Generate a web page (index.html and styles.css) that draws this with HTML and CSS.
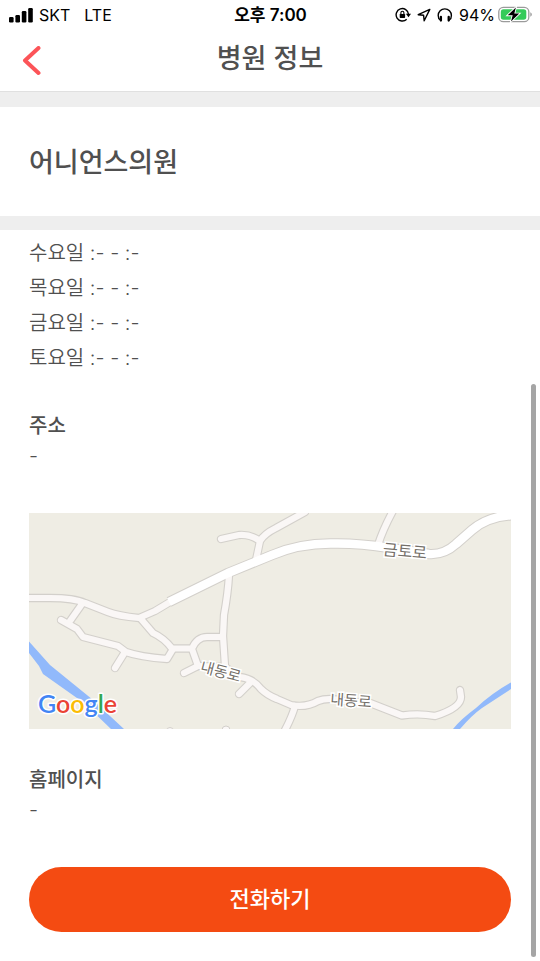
FILE: index.html
```html
<!DOCTYPE html>
<html lang="ko">
<head>
<meta charset="utf-8">
<meta name="viewport" content="width=device-width, initial-scale=1">
<title>병원 정보</title>
<link rel="stylesheet" href="styles.css">
</head>
<body>
<div class="screen">
  <div class="status">
    <div class="status-left">
      <svg width="24" height="16" viewBox="0 0 24 16" aria-hidden="true"><rect x="0" y="10" width="4.6" height="5.500" rx="1.2"/><rect x="6.400" y="8" width="4.600" height="7.500" rx="1.200"/><rect x="12.800" y="4" width="4.600" height="11.500" rx="1.200"/><rect x="19.200" y="1" width="4.600" height="14.500" rx="1.200"/></svg>
      <span>SKT</span>
      <span class="network">LTE</span>
    </div>
    <div class="time">오후 7:00</div>
    <div class="status-right">
      <svg width="16" height="16" viewBox="0 0 16 16" fill="none" stroke="#000" stroke-width="1.400" aria-hidden="true"><path d="M11.700 12.200A6.200 6.200 0 1 1 13.500 7.200"/><path d="M10.900 6.800h5.100l-2.500 3.400z" fill="#000" stroke="none"/><rect x="4.700" y="6.900" width="5.400" height="4.100" rx=".7" fill="#000" stroke="none"/><path d="M5.900 7V5.800a1.500 1.500 0 0 1 3 0V7" stroke-width="1.100"/></svg>
      <svg width="14" height="16" viewBox="0 0 14 16" fill="none" stroke="#000" stroke-width="1.400" stroke-linejoin="round" aria-hidden="true"><path d="M12.800 2.400L1.200 7.700l5.400.6.600 5.500z"/></svg>
      <svg class="phones" width="16" height="16" viewBox="0 0 16 16" fill="none" stroke="#000" stroke-width="1.400" stroke-linecap="round" aria-hidden="true"><path d="M3.300 13C1.800 12.200 1.200 10.600 1.200 8.500a6.600 6.600 0 0 1 13.200 0c0 2.100-.6 3.700-2.100 4.500"/><path d="M3.900 10v3.600M11.700 10v3.600" stroke-width="2.300"/></svg>
      <span>94%</span>
      <svg class="battery" width="34" height="18" viewBox="0 0 34 18" aria-hidden="true"><rect x=".8" y="1.300" width="30" height="14.400" rx="4.500" fill="#fff" stroke="#9b9b9b" stroke-width="1.300"/><rect x="2.800" y="3.300" width="25.500" height="10.400" rx="2.700" fill="#35cb5a"/><path d="M32.300 6.300c2 .9 2 3.500 0 4.400z" fill="#9b9b9b"/><path d="M17.900 1.500L9.700 9.300h5L13 15.400l8.200-7.800h-4.900z" stroke="#fff" stroke-width="1.800" paint-order="stroke"/></svg>
    </div>
  </div>
  <header class="header">
    <button class="back" type="button" aria-label="뒤로">
      <svg width="20" height="30" viewBox="0 0 20 30" fill="none" stroke="#fc5458" stroke-width="4" stroke-linecap="round" stroke-linejoin="round" aria-hidden="true"><path d="M16.500 2L3 14.500 16.500 27"/></svg>
    </button>
    <h1>병원 정보</h1>
  </header>
  <section class="name"><h2>어니언스의원</h2></section>
  <main class="content">
    <ul class="hours">
      <li>수요일 :- - :-</li>
      <li>목요일 :- - :-</li>
      <li>금요일 :- - :-</li>
      <li>토요일 :- - :-</li>
    </ul>
    <section class="field">
      <h3>주소</h3>
      <p>-</p>
    </section>
    <svg class="map" viewBox="29 513 482 216" role="img" aria-label="지도">
      <rect x="29" y="513" width="482" height="216" fill="#efede4"/>
      <g fill="#91b9fb">
        <path d="M29 641.500L50 665 90 697.500 124 729H111L84 703 43 674 39 666 29 653z"/>
        <path d="M511 682.500V689L482 708Q472 715 460 729H453Q461 719 476 708 492 693 511 682.500z"/>
      </g>
      <defs>
        <g id="lanes" fill="none" stroke-linecap="round" stroke-linejoin="round">
          <path d="M25 598H50Q74 598 85 603L108 612Q118 616 139 618L155 611 170 602"/>
          <path d="M82 604L70 621M61 620L77 629 83 637 118 646 126 652Q140 657 167 659L173 649M125 652L115 668"/>
          <path d="M141 619L153 633Q164 638 172 648.500H192Q197 637 207 637H222M192 649L198 666 184 673"/>
          <path d="M229 575Q228 593 224 615L223 636 225 666M198 666L225 667 240 677Q254 679 261 689 267 695 277 699L291 705Q306 708 318 701 328 697 344 701L370 703 402 715.500Q419 713 435 716 461 708 461 697L460 690"/>
          <path d="M250 683L239 694M295 706Q292 717 284 732M221 539L239 535Q250 534 260 541 264 534 276 528L305 512M260 541L256 560M378 545Q383 529 394 509"/>
        </g>
        <path id="avenue" d="M169 602L228 573 272 555Q300 543 333 543.500 358 543 390 548L429 554Q444 555 456 544L472 530Q488 516 515 515" fill="none" stroke-linejoin="round"/>
      </defs>
      <g fill="#faf7f6" stroke="#d3d0cb"><circle cx="170" cy="731" r="3.500"/><circle cx="226" cy="730" r="4"/></g>
      <use href="#lanes" stroke="#d3d0cb" stroke-width="8.400"/>
      <use href="#avenue" stroke="#d3d0cb" stroke-width="10.400"/>
      <use href="#lanes" stroke="#faf7f6" stroke-width="6.200"/>
      <use href="#avenue" stroke="#fff" stroke-width="8.400"/>
      <g class="roads">
        <text x="405" y="557" transform="rotate(5 405 551)">금토로</text>
        <text class="small" x="221" y="677" transform="rotate(15 221 671)">내동로</text>
        <text class="small" x="351" y="706" transform="rotate(4 351 700)">내동로</text>
      </g>
      <text class="logo" x="38" y="713"><tspan fill="#4285f4">G</tspan><tspan fill="#ea4335">o</tspan><tspan fill="#fbbc05">o</tspan><tspan fill="#4285f4">g</tspan><tspan fill="#34a853">l</tspan><tspan fill="#ea4335">e</tspan></text>
    </svg>
    <section class="field">
      <h3>홈페이지</h3>
      <p>-</p>
    </section>
    <button class="call" type="button">전화하기</button>
  </main>
  <div class="scrollbar" aria-hidden="true"></div>
</div>
</body>
</html>
```
FILE: styles.css
```css
* {
  box-sizing: border-box;
}

body {
  margin: 0;
  background: #fff;
  color: #505050;
  font-family: Inter, "Noto Sans CJK KR", sans-serif;
}

h1, h2, h3, p, ul {
  margin: 0;
  padding: 0;
}

button {
  border: 0;
  font-family: inherit;
  cursor: pointer;
}

svg {
  display: block;
  flex: none;
}

.screen {
  position: relative;
  min-height: 100vh;
}

.status {
  display: grid;
  grid-template-columns: 1fr auto 1fr;
  align-items: center;
  height: 30px;
  padding: 0 8px 0 9px;
  color: #000;
  font-size: 16px;
  line-height: 30px;
}

.status-left,
.status-right {
  display: flex;
  align-items: center;
  gap: 6px;
}

.status-right {
  justify-content: flex-end;
}

.network {
  margin-left: 8px;
}

.time {
  font-size: 17px;
  font-weight: 600;
}

.battery {
  margin-left: -3px;
}

.header {
  display: grid;
  grid-template-columns: 1fr auto 1fr;
  align-items: center;
  height: 62px;
  padding: 0 22px;
  border-bottom: 1px solid #e0e0e0;
}

.back {
  justify-self: start;
  padding: 0;
  background: none;
}

h1,
h2 {
  font-size: 27px;
  font-weight: 500;
  line-height: 40px;
}

h1 {
  padding-bottom: 4px;
}

.name {
  padding: 36px 29px 33px;
  border: solid #eee;
  border-width: 15px 0 14px;
}

.content {
  padding: 6px 29px 29px;
}

.hours {
  list-style: none;
  font-size: 20px;
  font-weight: 350;
  line-height: 35px;
}

.field {
  padding: 35px 0 42px;
  font-size: 20px;
  line-height: 30px;
}

.field h3 {
  font-size: 20px;
  font-weight: 500;
}

.field p {
  font-weight: 350;
}

.map {
  width: 100%;
  height: auto;
}

.map + .field {
  padding-top: 36px;
}

.roads {
  fill: #746f69;
  stroke: #fff;
  stroke-width: 3px;
  paint-order: stroke;
  font-size: 16px;
  text-anchor: middle;
}

.small {
  font-size: 15px;
}

.logo {
  font-family: Lato, sans-serif;
  font-size: 25px;
  font-weight: 600;
  stroke: #fff;
  stroke-width: 3px;
  stroke-linejoin: round;
  paint-order: stroke;
}

.call {
  display: block;
  width: 100%;
  height: 65px;
  padding: 0 0 6px;
  border-radius: 33px;
  background: #f44b12;
  color: #fff;
  font-size: 22px;
  font-weight: 500;
}

.scrollbar {
  position: absolute;
  top: 40%;
  right: 4px;
  bottom: 4px;
  width: 5px;
  border-radius: 3px;
  background: #a5a5a5;
}
```
